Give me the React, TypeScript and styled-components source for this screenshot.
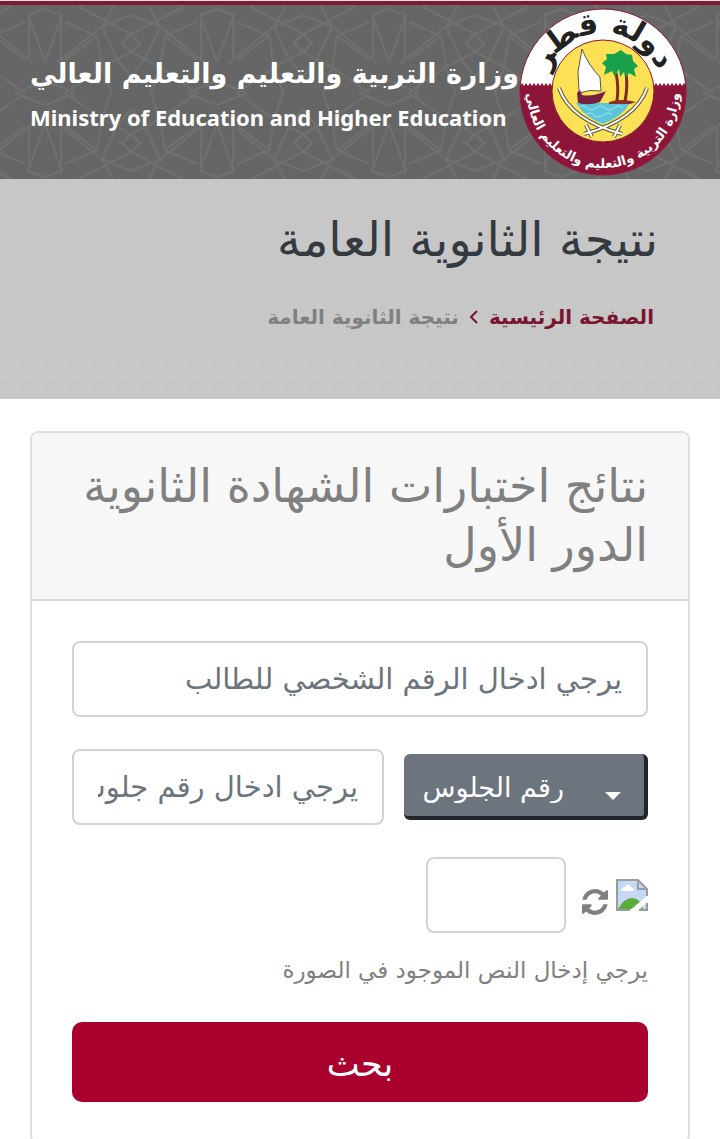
import React from "react";
import styled, { createGlobalStyle } from "styled-components";

const GlobalStyle = createGlobalStyle`
  *, *::before, *::after { box-sizing: border-box; }
  body {
    margin: 0;
    background: #fff;
    color: #808080;
    font-family: "DejaVu Sans", sans-serif;
  }
`;

const Page = styled.div`
  display: flex;
  flex-direction: column;
  border-top: 1px solid #f3dbe1;
`;

const Masthead = styled.header`
  position: relative;
  display: flex;
  align-items: center;
  padding: 0 32px 0 30px;
  height: 178px;
  background: #666;
  border-top: 4px solid #7d1b37;
`;

const Lattice = styled.svg`
  position: absolute;
  inset: 0;
  width: 100%;
  height: 100%;
`;

const Ministry = styled.div`
  position: relative;
  flex: 1;
  min-width: 0;
  display: flex;
  flex-direction: column;
  align-items: flex-start;
  padding-top: 6px;
  color: #fff;
  font-weight: 700;
  white-space: nowrap;
`;

const MinistryArabic = styled.span`
  font-size: 27px;
  line-height: 44px;
`;

const MinistryEnglish = styled.span`
  font-family: "Noto Sans", sans-serif;
  font-size: 22px;
  line-height: 42px;
`;

const Emblem = styled.svg`
  position: relative;
  flex: none;
  width: 170px;
  height: 170px;
  overflow: visible;
`;

const Hero = styled.section`
  position: relative;
  min-height: 220px;
  padding: 30px 62px 32px;
  background: #c7c7c7;
`;

const HeroTitle = styled.h1`
  position: relative;
  margin: 0;
  color: #343a40;
  font-size: 48px;
  font-weight: 400;
  line-height: 60px;
`;

const Crumbs = styled.nav`
  position: relative;
  display: flex;
  align-items: center;
  gap: 10px;
  margin-top: 28px;
  padding: 0 4px;
  font-size: 20px;
  font-weight: 700;
  line-height: 40px;

  a {
    color: #7a1530;
    text-decoration: none;
  }
`;

const Card = styled.main`
  margin: 32px 30px 0;
  border: 2px solid #dfdfdf;
  border-radius: 8px;
`;

const CardHeader = styled.header`
  padding: 24px 40px;
  background: #f7f7f7;
  border-bottom: 2px solid #dadada;
  border-radius: 6px 6px 0 0;
`;

const CardTitle = styled.h2`
  margin: 0;
  font-size: 46px;
  font-weight: 400;
  line-height: 59px;
`;

const Form = styled.form`
  display: flex;
  flex-direction: column;
  padding: 40px;
`;

const Row = styled.div<{ $gap?: number }>`
  display: flex;
  align-items: center;
  gap: ${(p) => p.$gap ?? 20}px;
  margin-top: 32px;
`;

const TextField = styled.input<{ $width?: string }>`
  flex: 0 1 auto;
  width: ${(p) => p.$width ?? "100%"};
  min-width: 0;
  height: 76px;
  padding: 12px 24px;
  color: #495057;
  background: #fff;
  border: 2px solid #ced4da;
  border-radius: 8px;
  font: 400 29px "DejaVu Sans", sans-serif;

  ${Form} > & { flex: none; }

  &::placeholder { color: #6c757d; opacity: 1; }
`;

const SelectBox = styled.div`
  position: relative;
  flex: none;
  width: 244px;

  &::after {
    content: "";
    position: absolute;
    top: 38px;
    right: 27px;
    border: 8px solid transparent;
    border-top-color: #fff;
    border-bottom: 0;
    pointer-events: none;
  }
`;

const Select = styled.select`
  appearance: none;
  display: block;
  width: 100%;
  height: 66px;
  padding: 4px 80px 0 8px;
  color: #fff;
  background: #6c757d;
  border: 0 solid #212529;
  border-width: 0 4px 4px 0;
  border-radius: 6px;
  font: 400 27px "DejaVu Sans", sans-serif;
`;

const Captcha = styled.div`
  display: flex;
  align-items: center;
  gap: 8px;
`;

const RefreshButton = styled.button`
  display: flex;
  margin-top: 14px;
  padding: 0;
  color: #808080;
  background: none;
  border: 0;
`;

const Hint = styled.label`
  margin-top: 16px;
  font-size: 23px;
  line-height: 42px;
`;

const Submit = styled.button`
  height: 80px;
  margin-top: 31px;
  padding: 4px 0 0;
  color: #fff;
  background: #aa002d;
  border: 0;
  border-radius: 10px;
  font: 400 35px "DejaVu Sans", sans-serif;
`;

const mirrors = ["", "translate(172 0) scale(-1 1)", "translate(0 172) scale(1 -1)", "translate(172 172) scale(-1 -1)"];

function LatticePattern() {
  return (
    <Lattice aria-hidden="true">
      <defs>
        <pattern id="lattice" width="172" height="172" x="45" y="2" patternUnits="userSpaceOnUse">
          {mirrors.map((transform) => (
            <g key={transform} transform={transform} fill="none" stroke="#707070" strokeWidth="2">
              <path d="M16 6V53M17 8L0 55M0 2L17 8M20 15L52 29L20 53M12 56L56 20L86 8M34 0L86 27L95 36L86 45L77 36L86 27" />
              <path d="M52 29L57 60L20 86M57 60L86 45M57 60L66 86M0 74L30 86M68 0L57 20L72 52L86 70" />
            </g>
          ))}
        </pattern>
      </defs>
      <rect width="100%" height="100%" fill="url(#lattice)" />
    </Lattice>
  );
}

function DotPattern() {
  return (
    <Lattice aria-hidden="true">
      <defs>
        <pattern id="dots" width="24" height="24" patternUnits="userSpaceOnUse">
          <circle cx="6" cy="6" r="3" fill="#cbcbcb" />
          <circle cx="18" cy="18" r="3" fill="#cbcbcb" />
        </pattern>
        <linearGradient id="fade" x2="0" y2="1">
          <stop offset="0" stopColor="#fff" stopOpacity="0.1" />
          <stop offset="1" stopColor="#fff" />
        </linearGradient>
        <mask id="dotFade">
          <rect width="100%" height="100%" fill="url(#fade)" />
        </mask>
      </defs>
      <rect width="100%" height="100%" fill="url(#dots)" mask="url(#dotFade)" />
    </Lattice>
  );
}

function StateEmblem() {
  return (
    <Emblem viewBox="0 0 170 170" role="img" aria-label="دولة قطر">
      <defs>
        <path id="topArc" d="M26 85A59 59 0 0 1 144 85" />
        <path id="bottomArc" d="M9 85A76 76 0 0 0 161 85" />
      </defs>
      <circle cx="85" cy="85" r="83" fill="#fff" stroke="#8d1537" strokeWidth="1" />
      <path
        d="M2 79l2-3 2 3 2-3 2 3 2-3 2 3 2-3 2 3 2-3 2 3 2-3 2 3 2-3 2 3 2-3 2 3H136l2-3 2 3 2-3 2 3 2-3 2 3 2-3 2 3 2-3 2 3 2-3 2 3 2-3 2 3 2-3 2 3V85A83 83 0 0 1 2 85Z"
        fill="#8d1537"
      />
      <circle cx="85" cy="84" r="51" fill="#fde154" stroke="#8d1537" strokeWidth="1" />
      <path d="M58 96H112Q104 110 85 117Q66 110 58 96Z" fill="#5bc5dc" />
      <path d="M60 101q5-4 9 0t9 0 9 0 9 0 9 0M67 108q5-4 9 0t9 0 9 0" fill="none" stroke="#a8e2ee" />
      <path d="M61 84L60 65L64 42Q70 58 82 70L83 84Q72 82 61 86Z" fill="#fff" stroke="#555" strokeWidth="1" />
      <path d="M59 86L62 83L64 88Q74 90 88 84L82 95Q71 99 60 96Z" fill="#75203f" />
      <path d="M91 95Q102 91 118 95L112 97H91Z" fill="#8f2c25" />
      <path d="M98 66Q101 80 99 94M108 66Q110 80 107 94" fill="none" stroke="#80291e" strokeWidth="3" />
      <path
        d="M101 62L97 70 94 64 86 68 88 60 84 56 89 52 88 47 96 47 103 43 108 47 114 48 115 54 120 59 116 62 118 70 111 66 108 71 106 65 102 70Z"
        fill="#18a04c"
      />
      <g fill="none" stroke="#665a36" strokeWidth="4">
        <path d="M41 81Q52 113 104 127M129 81Q118 113 66 127M68 118L74 130M102 118L96 130" />
      </g>
      <g fill="none" stroke="#fff" strokeWidth="2">
        <path d="M41 81Q52 113 104 127M129 81Q118 113 66 127M68 118L74 130M102 118L96 130" />
      </g>
      <text fill="#222" fontSize="30" fontWeight="700" textAnchor="middle">
        <textPath href="#topArc" startOffset="50%">دولة قطر</textPath>
      </text>
      <text fill="#fff" fontSize="13" fontWeight="700" textAnchor="middle">
        <textPath href="#bottomArc" startOffset="50%">وزارة التربية والتعليم والتعليم العالي</textPath>
      </text>
    </Emblem>
  );
}

function BrokenImage() {
  return (
    <svg width="32" height="32" viewBox="0 0 32 32" role="img" aria-label="صورة التحقق">
      <path d="M1 1H22L31 10V31H1Z" fill="#c5d8f6" />
      <path d="M5 12Q6 8 9 8Q12 3 15 8Q18 9 18 12Z" fill="#fff" />
      <path d="M2 30Q8 19 16 19T27 30Z" fill="#5aac3c" />
      <path d="M32 16V22L22 32H13Z" fill="#fff" />
      <path d="M31 17V10L22 1H1V31H14M22 1V10H31M23 31H31V24" fill="none" stroke="#9b9b9b" strokeWidth="2" />
    </svg>
  );
}

function RefreshIcon() {
  return (
    <svg width="26" height="26" viewBox="0 0 1536 1536" fill="currentColor" aria-hidden="true">
      <path d="M1511 928q0 5-1 7-64 268-268 434.5T764 1536q-146 0-282.5-55T238 1324l-129 129q-19 19-45 19t-45-19-19-45V960q0-26 19-45t45-19h448q26 0 45 19t19 45-19 45l-137 137q71 66 161 102t187 36q134 0 250-65t186-179q11-17 53-117 8-23 30-23h192q13 0 22.5 9.5t9.5 22.5zM1536 128v448q0 26-19 45t-45 19h-448q-26 0-45-19t-19-45 19-45l138-138Q969 256 768 256q-134 0-250 65T332 500q-11 17-53 117-8 23-30 23H50q-13 0-22.5-9.5T18 608v-7q65-268 270-434.5T768 0q146 0 284 55.5T1297 212l130-129q19-19 45-19t45 19 19 45z" />
    </svg>
  );
}

export default function App() {
  return (
    <Page dir="rtl" lang="ar">
      <GlobalStyle />
      <Masthead dir="ltr">
        <LatticePattern />
        <Ministry>
          <MinistryArabic dir="rtl">وزارة التربية والتعليم والتعليم العالي</MinistryArabic>
          <MinistryEnglish lang="en">Ministry of Education and Higher Education</MinistryEnglish>
        </Ministry>
        <StateEmblem />
      </Masthead>
      <Hero>
        <DotPattern />
        <HeroTitle>نتيجة الثانوية العامة</HeroTitle>
        <Crumbs aria-label="مسار التنقل">
          <a href="#home">الصفحة الرئيسية</a>
          <svg width="10" height="14" viewBox="0 0 10 14" aria-hidden="true">
            <path d="M8 1L2 7L8 13" fill="none" stroke="#7a1530" strokeWidth="2" />
          </svg>
          <span>نتيجة الثانوية العامة</span>
        </Crumbs>
      </Hero>
      <Card>
        <CardHeader>
          <CardTitle>نتائج اختبارات الشهادة الثانوية الدور الأول</CardTitle>
        </CardHeader>
        <Form>
          <TextField aria-label="الرقم الشخصي" placeholder="يرجي ادخال الرقم الشخصي للطالب" />
          <Row>
            <SelectBox>
              <Select aria-label="نوع الرقم">
                <option>رقم الجلوس</option>
              </Select>
            </SelectBox>
            <TextField aria-label="رقم الجلوس" placeholder="يرجي ادخال رقم جلوس الطالب" />
          </Row>
          <Row $gap={16}>
            <Captcha>
              <BrokenImage />
              <RefreshButton type="button" aria-label="تحديث">
                <RefreshIcon />
              </RefreshButton>
            </Captcha>
            <TextField id="captcha" $width="140px" />
          </Row>
          <Hint htmlFor="captcha">يرجي إدخال النص الموجود في الصورة</Hint>
          <Submit type="submit">بحث</Submit>
        </Form>
      </Card>
    </Page>
  );
}
